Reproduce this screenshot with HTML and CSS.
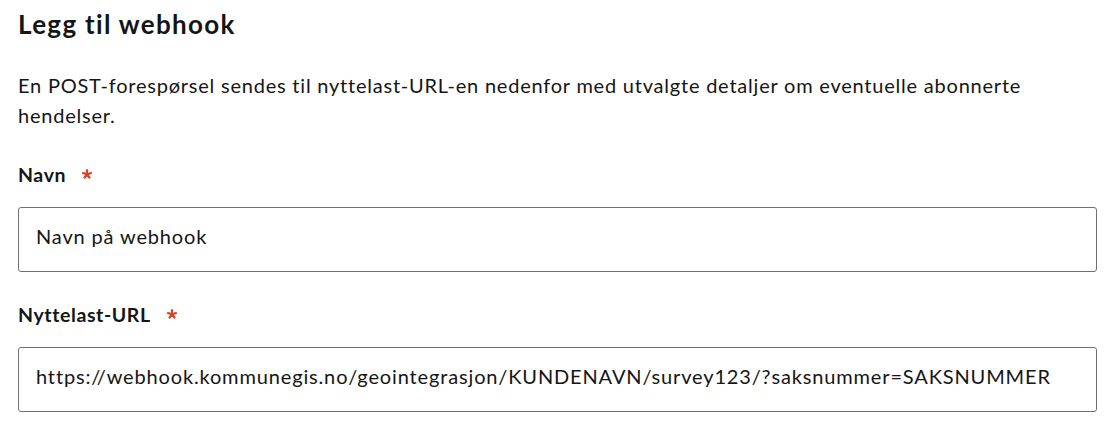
FILE: index.html
```html
<!DOCTYPE html>
<html lang="no">
<head>
<meta charset="utf-8">
<link rel="stylesheet" href="styles.css">
</head>
<body>
<div class="page">
  <h1 class="title">Legg til webhook</h1>
  <p class="desc">En POST-forespørsel sendes til nyttelast-URL-en nedenfor med utvalgte detaljer om eventuelle abonnerte hendelser.</p>
  <div class="field">
    <label class="label">Navn <svg class="req" viewBox="0 0 12 12" width="12" height="12" aria-hidden="true"><path d="M6 6.3V1.2M6 6.3L10.85 4.72M6 6.3L9 10.43M6 6.3L3 10.43M6 6.3L1.15 4.72" stroke="#d8452c" stroke-width="2.3" fill="none"/></svg></label>
    <div class="input">Navn på webhook</div>
  </div>
  <div class="field">
    <label class="label">Nyttelast-URL <svg class="req" viewBox="0 0 12 12" width="12" height="12" aria-hidden="true"><path d="M6 6.3V1.2M6 6.3L10.85 4.72M6 6.3L9 10.43M6 6.3L3 10.43M6 6.3L1.15 4.72" stroke="#d8452c" stroke-width="2.3" fill="none"/></svg></label>
    <div class="input">https://webhook.kommunegis.no/geointegrasjon/KUNDENAVN/survey123/?saksnummer=SAKSNUMMER</div>
  </div>
</div>
</body>
</html>
```
FILE: styles.css
```css
html, body { margin: 0; padding: 0; background: #fff; }
body { font-family: Lato, "Noto Sans", sans-serif; color: #151515; }
.page { padding: 8px 16px 0 18px; width: 1079px; }
.title { font-size: 26px; font-weight: 700; margin: 0; line-height: 32px; letter-spacing: 1.32px; }
.desc { font-size: 20px; line-height: 30px; margin: 30px 0 0; width: 1060px; letter-spacing: 0.78px; }
.field { margin-top: 32px; }
.field + .field { margin-top: 30px; }
.label { display: flex; align-items: center; gap: 15px; font-size: 19.5px; font-weight: 700; line-height: 26px; letter-spacing: 0.6px; }
.req { display: block; margin-top: -2px; }
.input { margin-top: 19px; border: 1px solid #707070; border-radius: 3px; box-sizing: border-box; height: 65px; padding: 16px 17px 0; line-height: 24px; font-size: 20px; letter-spacing: 0.85px; white-space: nowrap; }
```
